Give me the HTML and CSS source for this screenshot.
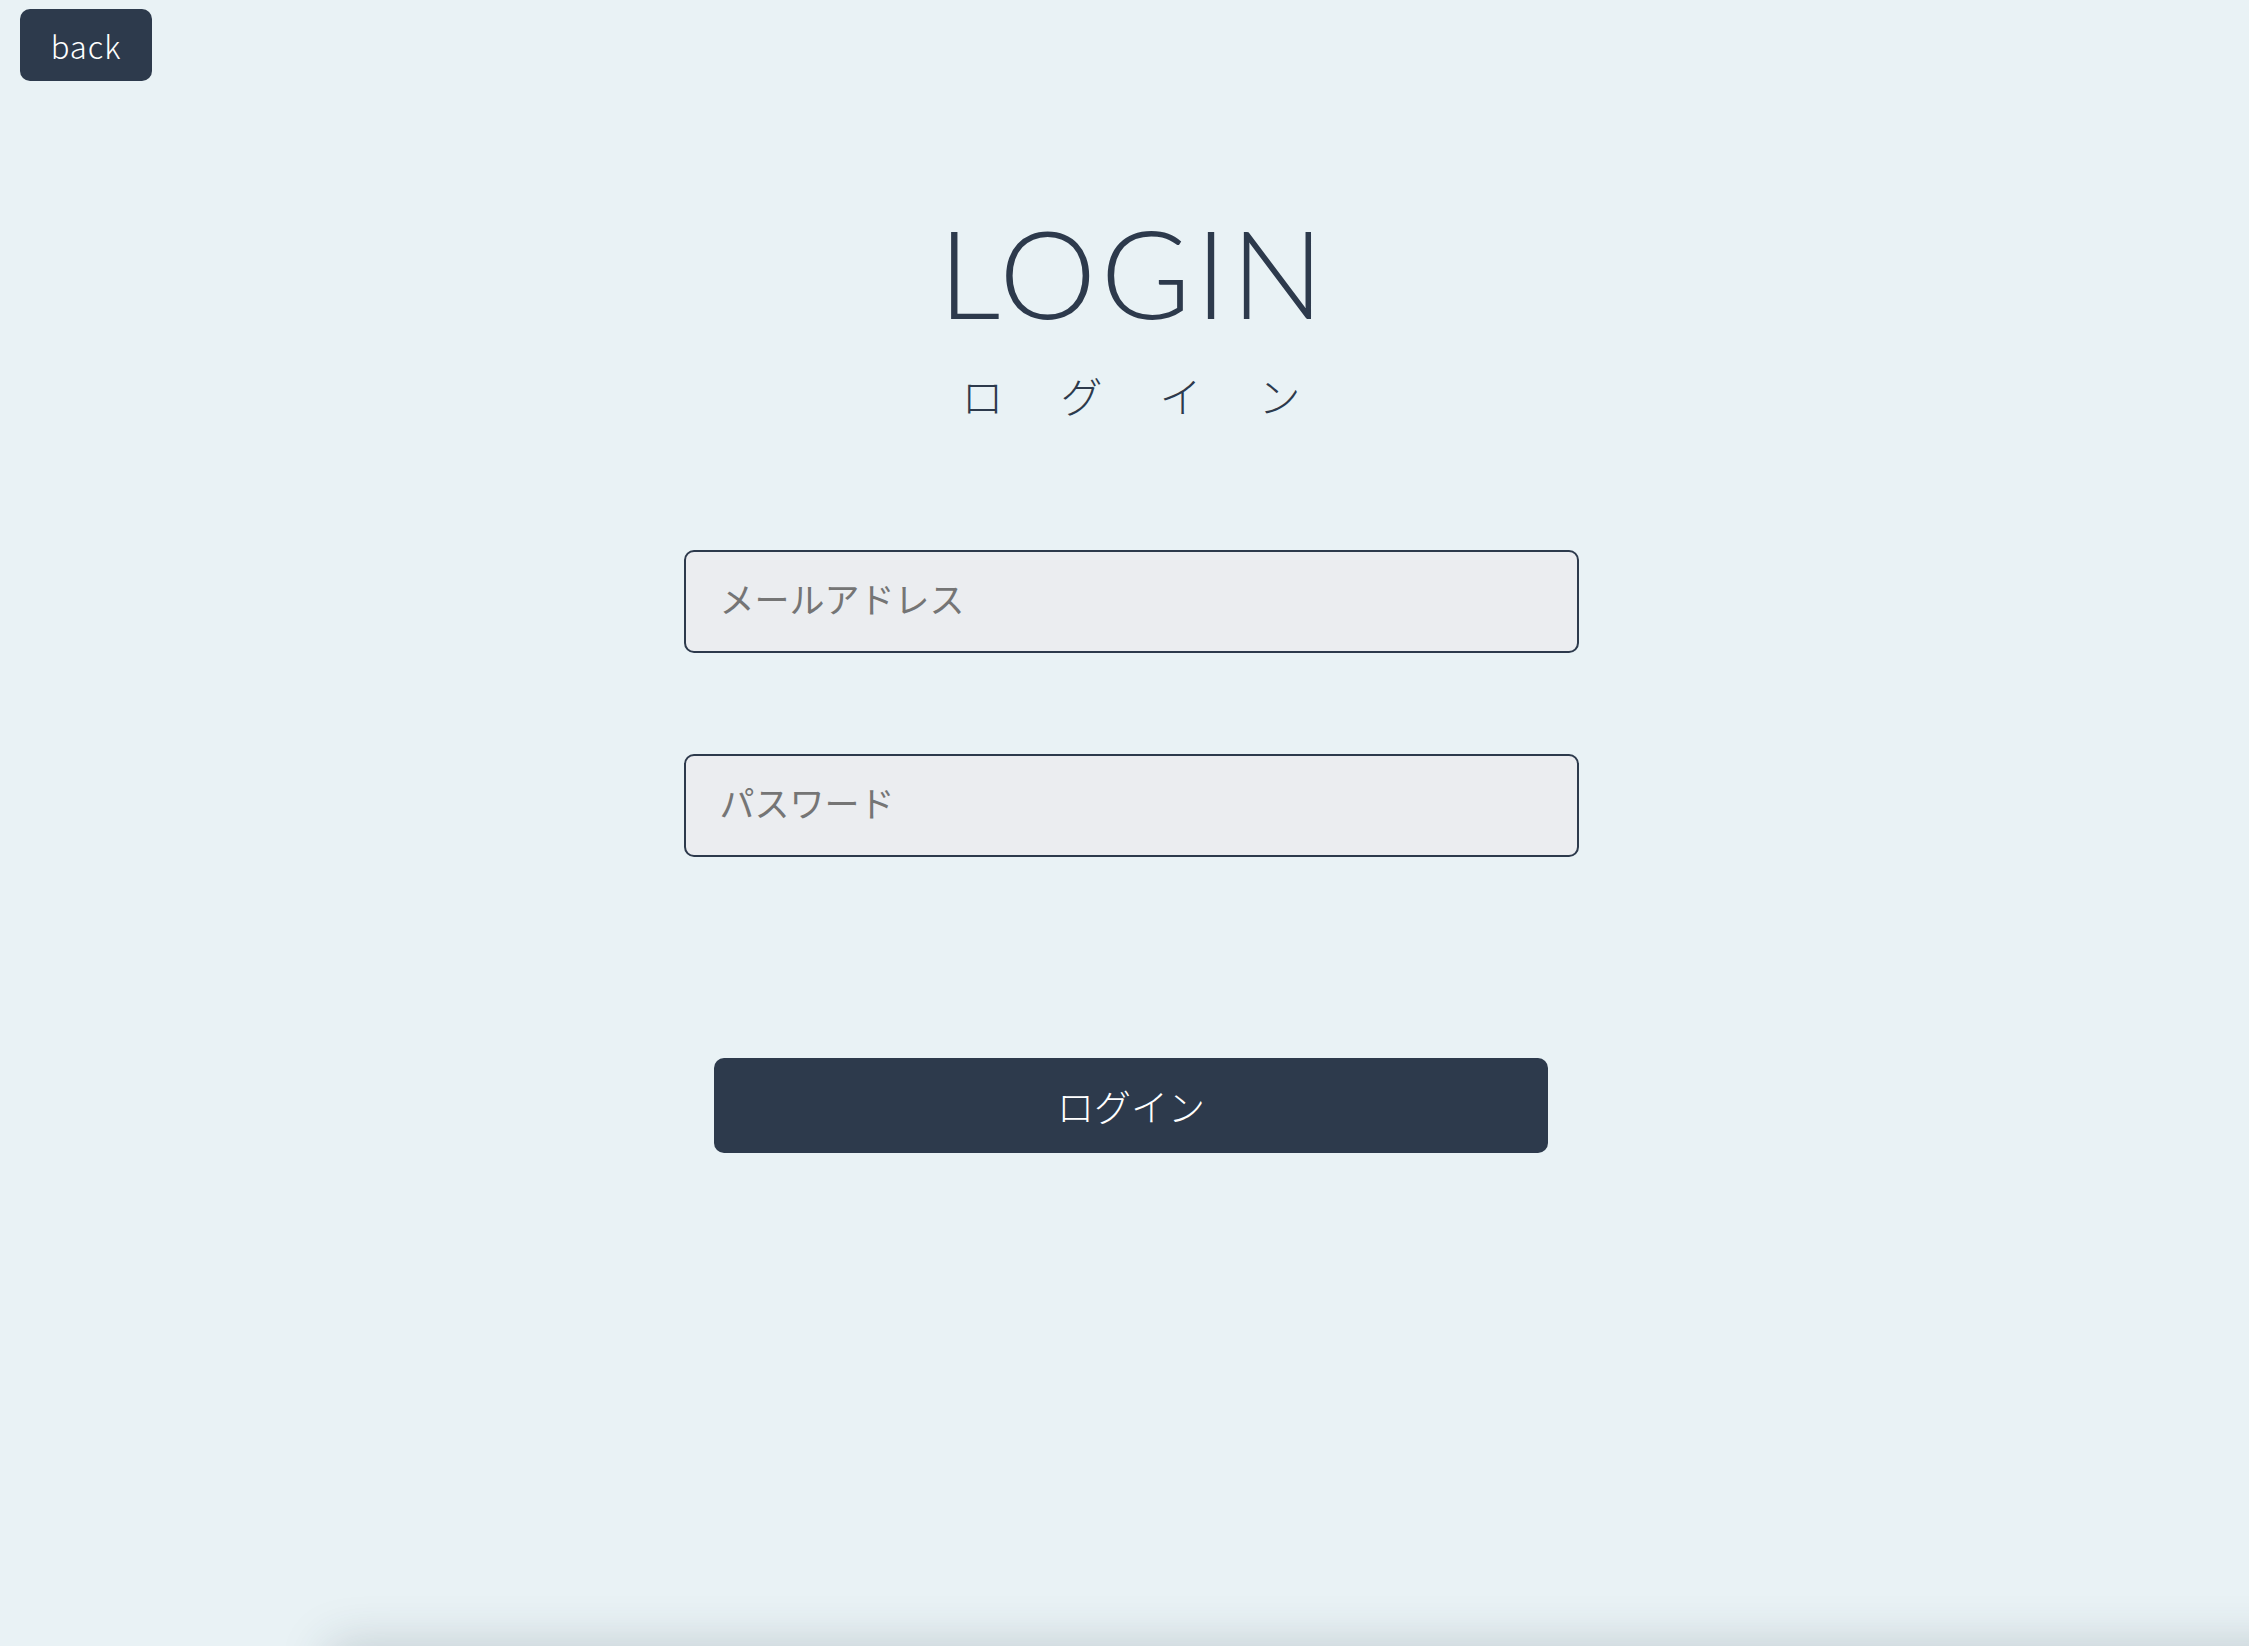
FILE: index.html
```html
<!DOCTYPE html>
<html lang="ja">
<head>
<meta charset="utf-8">
<title>LOGIN</title>
<link rel="stylesheet" href="styles.css">
</head>
<body>
<header class="topbar">
  <button class="back-btn" type="button">back</button>
</header>
<main class="login">
  <div class="heading">
    <h1 class="heading-en">LOGIN</h1>
    <p class="heading-ja">ログイン</p>
  </div>
  <form class="login-form">
    <input class="field" type="email" placeholder="メールアドレス">
    <input class="field" type="password" placeholder="パスワード">
    <button class="submit" type="button">ログイン</button>
  </form>
</main>
<div class="dock"></div>
</body>
</html>
```

FILE: styles.css
```css
html, body {
  margin: 0;
  padding: 0;
}
body {
  background: #e9f2f5;
  min-height: 100vh;
  color: #2d3a4c;
  font-family: "Noto Sans CJK JP", "Noto Sans", sans-serif;
  overflow: hidden;
}
.topbar {
  display: flex;
  padding: 9px 0 0 20px;
}
.back-btn {
  width: 132px;
  height: 72px;
  border: none;
  border-radius: 10px;
  background: #2d3a4c;
  color: #ffffff;
  font-family: "Noto Sans CJK JP", "Noto Sans", sans-serif;
  font-weight: 300;
  font-size: 31px;
  letter-spacing: 1px;
  padding: 0;
  line-height: 1;
}
.login {
  display: flex;
  flex-direction: column;
  align-items: center;
  padding-left: 13px;
}
.heading {
  display: flex;
  flex-direction: column;
  align-items: center;
  margin-top: 129px;
}
.heading-en {
  margin: 0;
  font-family: "Lato", sans-serif;
  font-weight: 300;
  font-size: 123px;
  line-height: 1;
  letter-spacing: 4px;
  padding-left: 4px;
}
.heading-ja {
  margin: 41px 0 0;
  font-family: "Noto Sans CJK JP", sans-serif;
  font-weight: 300;
  font-size: 42px;
  line-height: 1;
  letter-spacing: 57px;
  padding-left: 57px;
}
.login-form {
  display: flex;
  flex-direction: column;
  align-items: center;
  margin-top: 134px;
}
.field {
  box-sizing: border-box;
  width: 895px;
  height: 103px;
  border: 2px solid #2d3a4c;
  border-radius: 10px;
  background: #ebedf0;
  padding: 0 34px 8px;
  font-family: "Noto Sans CJK JP", sans-serif;
  font-size: 35px;
  color: #2d3a4c;
  outline: none;
}
.field::placeholder {
  color: #757575;
}
.field + .field {
  margin-top: 101px;
}
.submit {
  margin-top: 201px;
  width: 834px;
  height: 95px;
  border: none;
  border-radius: 10px;
  background: #2d3a4c;
  color: #ffffff;
  font-family: "Noto Sans CJK JP", sans-serif;
  font-size: 37px;
  font-weight: 300;
}
.dock {
  position: fixed;
  left: 330px;
  right: -60px;
  top: 100vh;
  height: 60px;
  box-shadow: 0 0 50px rgba(40, 60, 75, 0.22);
  background: #dfe7ea;
}
```
